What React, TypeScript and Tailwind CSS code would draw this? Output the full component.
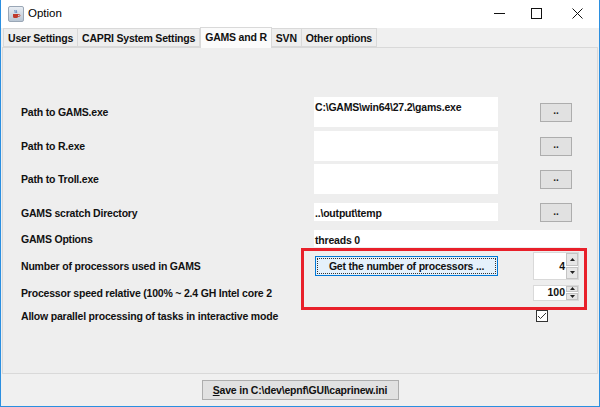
import React from 'react';

const font = { fontFamily: '"Liberation Sans", Arial, sans-serif' };

const TitleBar = () => (
  <div className="flex h-[28px] items-center bg-white pb-[1px]">
    <div className="ml-[7px] flex h-[16px] w-[16px] items-center justify-center rounded-[2px] border border-[#9aa7b6] bg-gradient-to-b from-[#e8edf3] to-[#b9c6d4]">
      <svg width="10" height="10" viewBox="0 0 10 10">
        <path d="M2 5h5v2.5a1.5 1.5 0 0 1-1.5 1.5h-2A1.5 1.5 0 0 1 2 7.5z" fill="#c0392b" />
        <path d="M7 5.5h1a1 1 0 0 1 0 2H7" fill="none" stroke="#c0392b" strokeWidth="0.8" />
        <path d="M4 1c-1 1 1 1.5 0 3M5.5 1c-1 1 1 1.5 0 3" fill="none" stroke="#3d6fb0" strokeWidth="0.8" />
      </svg>
    </div>
    <span className="ml-[4px] text-[11.5px] text-black">Option</span>
    <div className="ml-auto flex h-full items-center">
      <div className="flex h-full w-[37px] items-center justify-center">
        <svg width="11" height="11" viewBox="0 0 11 11">
          <path d="M0 5.5h11" stroke="#111" strokeWidth="1" />
        </svg>
      </div>
      <div className="flex h-full w-[37px] items-center justify-center">
        <svg width="11" height="11" viewBox="0 0 11 11">
          <rect x="0.5" y="0.5" width="10" height="10" fill="none" stroke="#111" strokeWidth="1" />
        </svg>
      </div>
      <div className="flex h-full w-[44px] items-center justify-center">
        <svg width="11" height="11" viewBox="0 0 11 11">
          <path d="M0.5 0.5l10 10M10.5 0.5l-10 10" stroke="#111" strokeWidth="1" />
        </svg>
      </div>
    </div>
  </div>
);

const tabs = ['User Settings', 'CAPRI System Settings', 'GAMS and R', 'SVN', 'Other options'];

const Tabs = () => (
  <div className="flex h-[19px] items-end pl-[2px]">
    {tabs.map((t) =>
      t === 'GAMS and R' ? (
        <div
          key={t}
          className="relative z-10 -mb-[1px] flex h-[21px] items-center border border-b-0 border-[#d9d9d9] bg-[#fbfbfb] px-[4px] pb-[1px] text-[10.5px] font-bold tracking-[-0.2px] text-[#111]"
        >
          {t}
        </div>
      ) : (
        <div
          key={t}
          className="flex h-[19px] items-center border border-l-0 border-[#d9d9d9] bg-[#eeeeee] px-[4px] pt-[2px] text-[10.5px] font-bold tracking-[-0.2px] text-[#111] first:border-l"
        >
          {t}
        </div>
      )
    )}
  </div>
);

const DotsButton = ({ h = 'h-[19px]' }: { h?: string }) => (
  <div
    className={`ml-[42px] flex w-[32px] ${h} items-center justify-center border border-[#adadad] bg-[#e1e1e1] pb-[2px] text-[10px] font-bold leading-none text-[#222]`}
  >
    ..
  </div>
);

const Arrow = ({ up }: { up?: boolean }) => (
  <svg width="5" height="3" viewBox="0 0 5 3">
    {up ? <path d="M0 3h5L2.5 0z" fill="#222" /> : <path d="M0 0h5L2.5 3z" fill="#222" />}
  </svg>
);

const Spinner = ({ value, h }: { value: string; h: string }) => (
  <div className={`flex ${h} w-[46px] border border-[#d9d9d9] bg-white`}>
    <div className="flex flex-1 items-center justify-end pr-[1px] pt-[1px] text-[10.5px] font-bold text-[#111]">{value}</div>
    <div className="flex w-[12px] flex-col gap-[1px] bg-white">
      <div className="flex flex-1 items-center justify-center border border-[#c4c4c4] bg-[#e6e6e6]">
        <Arrow up />
      </div>
      <div className="flex flex-1 items-center justify-center border border-[#c4c4c4] bg-[#e6e6e6]">
        <Arrow />
      </div>
    </div>
  </div>
);

const Label = ({ children }: { children: React.ReactNode }) => (
  <div className="w-[293px] shrink-0 pt-[2px] text-[10.5px] font-bold tracking-[-0.2px] text-[#111]">{children}</div>
);

const Field = ({ value, w = 'w-[184px]', h }: { value?: string; w?: string; h: string }) => (
  <div className={`${w} ${h} bg-white pl-[1px] pt-[3px] text-[10.5px] font-bold tracking-[-0.2px] text-[#111]`}>
    {value}
  </div>
);

const App = () => {
  return (
    <div
      style={font}
      className="flex h-[407px] w-[600px] flex-col overflow-hidden border-x border-b border-[#2b8fe0] bg-[#f0f0f0]"
    >
      <TitleBar />
      <Tabs />
      {/* tab panel */}
      <div className="relative mx-[1px] h-[327px] border border-[#d9d9d9] bg-[#eeeeee] pl-[18px] pt-[49px]">
        <div className="flex h-[30px] items-center">
          <Label>Path to GAMS.exe</Label>
          <Field value="C:\GAMS\win64\27.2\gams.exe" h="h-[30px]" />
          <DotsButton />
        </div>
        <div className="mt-[4px] flex h-[30px] items-center">
          <Label>Path to R.exe</Label>
          <Field h="h-[30px]" />
          <DotsButton />
        </div>
        <div className="mt-[3px] flex h-[30px] items-center">
          <Label>Path to Troll.exe</Label>
          <Field h="h-[30px]" />
          <DotsButton />
        </div>
        <div className="mt-[9px] flex h-[19px] items-center">
          <Label>GAMS scratch Directory</Label>
          <Field value="..\output\temp" h="h-[18px] self-start" />
          <DotsButton />
        </div>
        <div className="mt-[8px] flex h-[17px] items-center">
          <Label>GAMS Options</Label>
          <Field value="threads 0" w="w-[266px]" h="h-[17px]" />
        </div>
        <div className="mt-[5px] flex h-[28px] items-center">
          <Label>Number of processors used in GAMS</Label>
          <div className="ml-[1px] flex h-[20px] w-[183px] items-center justify-center border border-[#0078d7] bg-[#e5f1fb] p-[1px]">
            <div className="flex h-full w-full items-center justify-center border border-dotted border-[#333] pt-[1px] text-[10.5px] font-bold tracking-[-0.2px] text-[#111]">
              Get the number of processors ...
            </div>
          </div>
          <div className="ml-[35px]">
            <Spinner value="4" h="h-[28px]" />
          </div>
        </div>
        <div className="mt-[5px] flex h-[15px] items-center">
          <Label>Processor speed relative (100% ~ 2.4 GH Intel core 2</Label>
          <div className="ml-[219px]">
            <Spinner value="100" h="h-[16px]" />
          </div>
        </div>
        <div className="mt-[10px] flex h-[12px] items-center">
          <Label>Allow parallel processing of tasks in interactive mode</Label>
          <div className="ml-[222px] flex h-[12px] w-[12px] items-center justify-center border border-[#333] bg-white">
            <svg width="10" height="8" viewBox="0 0 10 8">
              <path d="M1 4l2.5 2.5L9 1" fill="none" stroke="#333" strokeWidth="1" />
            </svg>
          </div>
        </div>
        {/* red highlight annotation */}
        <div className="absolute left-[298px] top-[200px] h-[62px] w-[286px] border-[3px] border-[#e8202a]" />
      </div>
      <div className="flex flex-1 items-center justify-center">
        <div className="flex h-[20px] w-[197px] items-center justify-center border border-[#adadad] bg-[#e1e1e1] pt-[1px] text-[10.5px] font-bold tracking-[-0.2px] text-[#111]">
          <span className="underline">S</span>ave in C:\dev\epnf\GUI\caprinew.ini
        </div>
      </div>
    </div>
  );
};

export default App;
